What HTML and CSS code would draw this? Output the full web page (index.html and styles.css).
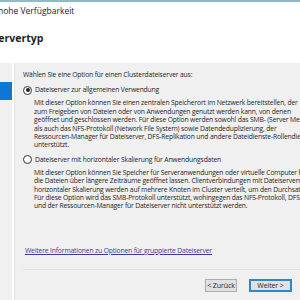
FILE: index.html
```html
<!DOCTYPE html>
<html lang="de">
<head>
  <meta charset="UTF-8" />
  <title>Assistent für hohe Verfügbarkeit</title>
  <link rel="stylesheet" href="styles.css">
</head>
<body>
  <div class="window">
    <div class="topline"></div>
    <div class="header">
      <div class="title">hohe Verfügbarkeit</div>
      <h1>Dateiservertyp</h1>
    </div>

    <div class="body">
      <div class="nav">
        <div class="nav-item selected"></div>
      </div>
      <div class="sep"></div>

      <div class="main">
        <p class="intro">Wählen Sie eine Option für einen Clusterdateiserver aus:</p>

        <label class="option">
          <span class="radio checked"></span>
          <span>Dateiserver zur allgemeinen Verwendung</span>
        </label>
        <p class="desc">Mit dieser Option können Sie einen zentralen Speicherort im Netzwerk bereitstellen, der<br>
          zum Freigeben von Dateien oder von Anwendungen genutzt werden kann, von denen<br>
          geöffnet und geschlossen werden. Für diese Option werden sowohl das SMB- (Server Message Block)<br>
          als auch das NFS-Protokoll (Network File System) sowie Datendeduplizierung, der<br>
          Ressourcen-Manager für Dateiserver, DFS-Replikation und andere Dateidienste-Rollendienste<br>
          unterstützt.</p>

        <label class="option">
          <span class="radio"></span>
          <span>Dateiserver mit horizontaler Skalierung für Anwendungsdaten</span>
        </label>
        <p class="desc">Mit dieser Option können Sie Speicher für Serveranwendungen oder virtuelle Computer bereitstellen,<br>
          die Dateien über längere Zeiträume geöffnet lassen. Clientverbindungen mit Dateiservern mit<br>
          horizontaler Skalierung werden auf mehrere Knoten im Cluster verteilt, um den Durchsatz zu erhöhen.<br>
          Für diese Option wird das SMB-Protokoll unterstützt, wohingegen das NFS-Protokoll, DFS-Replikation<br>
          und der Ressourcen-Manager für Dateiserver nicht unterstützt werden.</p>

        <a class="more" href="#">Weitere Informationen zu Optionen für gruppierte Dateiserver</a>

        <div class="footer">
          <button class="btn">&lt; Zurück</button>
          <button class="btn default">Weiter &gt;</button>
        </div>
      </div>
    </div>
  </div>
</body>
</html>
```

FILE: styles.css
```css
* {
  margin: 0;
  padding: 0;
  box-sizing: border-box;
}

body {
  width: 300px;
  height: 300px;
  overflow: hidden;
  font-family: "Open Sans", "Noto Sans", sans-serif;
  color: #1e1e1e;
  background: #f0f0f0;
}

.window {
  display: flex;
  flex-direction: column;
  height: 300px;
}

.topline {
  height: 2px;
  background: #8fbcc4;
}

.header {
  height: 61px;
  background: #fff;
  white-space: nowrap;
  overflow: hidden;
}

.title {
  font-size: 8.5px;
  line-height: 12px;
  margin-top: 3px;
  text-indent: -2px;
}

h1 {
  font-size: 10.5px;
  font-weight: 700;
  line-height: 14px;
  margin-top: 14px;
  text-indent: -35px;
}

.body {
  flex: 1;
  display: flex;
  background: #f0f0f0;
}

.nav {
  width: 12px;
  padding-top: 19px;
}

.nav-item {
  height: 18px;
}

.nav-item.selected {
  background: #0a78d4;
}

.sep {
  width: 3px;
  background: #fff;
  border-right: 1px solid #e2e2e2;
}

.main {
  flex: 1;
  display: flex;
  flex-direction: column;
  padding: 8px 0 0 8px;
  white-space: nowrap;
  overflow: hidden;
  font-size: 6.75px;
  line-height: 8.4px;
  letter-spacing: -0.15px;
}

.intro {
  margin-bottom: 6px;
}

.option {
  display: flex;
  align-items: center;
  gap: 3px;
  height: 10px;
}

.radio {
  width: 9px;
  height: 9px;
  border: 1px solid #333;
  border-radius: 50%;
  background: #fff;
  display: flex;
  align-items: center;
  justify-content: center;
}

.radio.checked::after {
  content: "";
  width: 4px;
  height: 4px;
  border-radius: 50%;
  background: #222;
}

.desc {
  padding-left: 11px;
  margin: 4px 0 5px;
}

.more {
  margin-top: 31px;
  padding-left: 2px;
  color: #3c3a9e;
}

.footer {
  margin-top: 14px;
  border-top: 1px solid #e2e2e2;
  padding-top: 9px;
  display: flex;
  justify-content: flex-end;
  gap: 12px;
  padding-right: 8px;
}

.btn {
  font-family: inherit;
  font-size: 7px;
  letter-spacing: -0.1px;
  height: 13px;
  background: #e1e1e1;
  border: 1px solid #adadad;
  color: #1e1e1e;
  width: 32px;
}

.btn.default {
  width: 43px;
  border: 2px solid #2f87c4;
}
```
